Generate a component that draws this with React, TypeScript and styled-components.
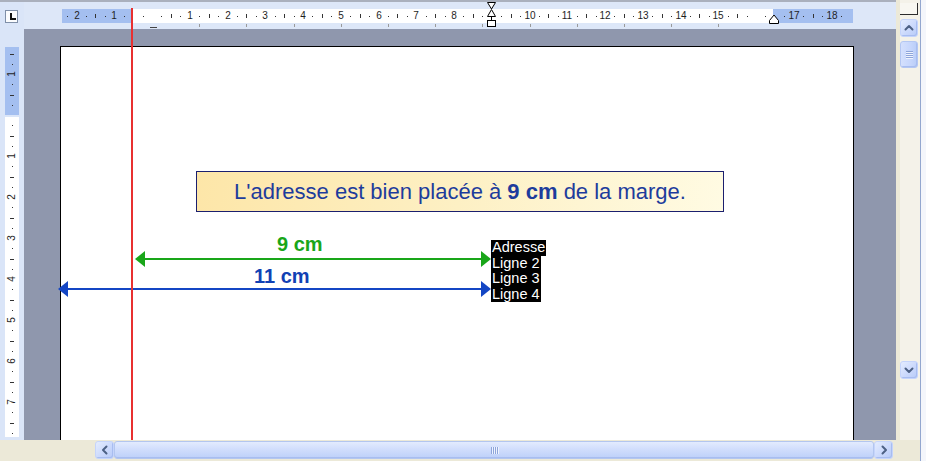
import React from 'react';
import styled, { createGlobalStyle } from 'styled-components';

const GlobalStyle = createGlobalStyle`
  html, body {
    margin: 0;
    padding: 0;
  }
  body {
    background: #ece9d8;
    font-family: "Liberation Sans", Arial, sans-serif;
  }
  * {
    box-sizing: border-box;
  }
`;

// ruler scale, in window pixels
const ZERO_X = 152;
const CM_X = 37.75;
const ZERO_Y = 115;
const CM_Y = 41;
const STRIP_X = 62;
const STRIP_Y = 47;

const Window = styled.div`
  position: relative;
  width: 926px;
  height: 461px;
  display: flex;
  overflow: hidden;
  background: #ece9d8;
  font-family: "Liberation Sans", Arial, sans-serif;
`;

const Main = styled.div`
  width: 920px;
  display: flex;
  flex-direction: column;
`;

const Edge = styled.div`
  width: 6px;
  border-left: 1px solid #93a7cf;
  background: #f4f6fb;
`;

const Body = styled.div`
  height: 440px;
  display: flex;
`;

const LeftCol = styled.div`
  width: 24px;
  display: flex;
  flex-direction: column;
  background: #dae5f8;
`;

const Corner = styled.div`
  height: 29px;
  border-top: 2px solid #aab0bd;
  padding: 8px 0 0 5px;
`;

const TabSelector = styled.div`
  position: relative;
  width: 13px;
  height: 13px;
  border: 1px solid #7f8fa8;
  background: #fbfcfe;

  &::before {
    content: '';
    position: absolute;
    left: 4px;
    top: 2px;
    width: 2px;
    height: 7px;
    background: #111;
  }
  &::after {
    content: '';
    position: absolute;
    left: 4px;
    top: 7px;
    width: 6px;
    height: 2px;
    background: #111;
  }
`;

const VRuler = styled.div`
  position: relative;
  flex: 1;
  margin: 18px 5px 3px;
  background: linear-gradient(to bottom, #a4bff0 0 68px, #dae5f8 68px 70px, #fff 70px);
`;

const VNum = styled.span<{ $pos: number }>`
  position: absolute;
  left: 50%;
  top: ${p => p.$pos}px;
  transform: translate(-50%, -50%) rotate(-90deg);
  font-size: 10px;
  line-height: 10px;
  color: #1e1e1e;
`;

const VDot = styled.span<{ $pos: number }>`
  position: absolute;
  left: 7px;
  top: ${p => p.$pos}px;
  width: 1px;
  height: 1px;
  background: #333;
`;

const VHalf = styled.span<{ $pos: number }>`
  position: absolute;
  left: 5px;
  top: ${p => p.$pos}px;
  width: 4px;
  height: 1px;
  background: #333;
`;

const Center = styled.div`
  width: 872px;
  display: flex;
  flex-direction: column;
`;

const HRulerBar = styled.div`
  position: relative;
  height: 29px;
  border-top: 2px solid #aab0bd;
  background: #dde7f8;
  padding: 7px 0 0 38px;
`;

const HStrip = styled.div<{ $left: number; $right: number }>`
  position: relative;
  width: 791px;
  height: 14px;
  background: linear-gradient(
    to right,
    #a4bff0 0 ${p => p.$left}px,
    #fff ${p => p.$left}px ${p => p.$right}px,
    #a4bff0 ${p => p.$right}px
  );
`;

const HNum = styled.span<{ $pos: number }>`
  position: absolute;
  left: ${p => p.$pos}px;
  top: 0;
  transform: translateX(-50%);
  font-size: 10px;
  line-height: 14px;
  color: #1e1e1e;
`;

const HDot = styled.span<{ $pos: number }>`
  position: absolute;
  left: ${p => p.$pos}px;
  top: 7px;
  width: 1px;
  height: 1px;
  background: #333;
`;

const HHalf = styled.span<{ $pos: number }>`
  position: absolute;
  left: ${p => p.$pos}px;
  top: 5px;
  width: 1px;
  height: 4px;
  background: #333;
`;

const TabMark = styled.span<{ $pos: number }>`
  position: absolute;
  left: ${p => p.$pos}px;
  top: 22px;
  width: 1px;
  height: 3px;
  background: #9a9a9a;
`;

const IndentDash = styled.span`
  position: absolute;
  left: 126px;
  top: 25px;
  width: 7px;
  height: 1px;
  background: #444;
`;

const Marker = styled.svg<{ $left: number; $top: number }>`
  position: absolute;
  left: ${p => p.$left}px;
  top: ${p => p.$top}px;
`;

const DocArea = styled.div`
  flex: 1;
  overflow: hidden;
  background: #8f97ad;
  padding: 17px 0 0 36px;
`;

const Page = styled.div`
  position: relative;
  width: 794px;
  height: 520px;
  flex-shrink: 0;
  background: #fff;
  border: 1px solid #000;
`;

const NoteBox = styled.div`
  position: absolute;
  left: 135px;
  top: 124px;
  width: 528px;
  height: 41px;
  border: 1px solid #1b1f6e;
  background: linear-gradient(100deg, #fde6a8 0%, #fdf0c4 50%, #fffbe3 100%);
  color: #1d3c9c;
  font-size: 22px;
  line-height: 39px;
  text-align: center;
  white-space: nowrap;

  b {
    font-weight: bold;
  }
`;

const Arrow = styled.svg<{ $left: number; $top: number }>`
  position: absolute;
  left: ${p => p.$left}px;
  top: ${p => p.$top}px;
  overflow: visible;
`;

const DimLabel = styled.div<{ $left: number; $top: number; $color: string }>`
  position: absolute;
  left: ${p => p.$left}px;
  top: ${p => p.$top}px;
  color: ${p => p.$color};
  font-size: 20px;
  line-height: 20px;
  font-weight: bold;
  white-space: nowrap;
`;

const Address = styled.div`
  position: absolute;
  left: 430px;
  top: 193px;
  display: flex;
  flex-direction: column;
  align-items: flex-start;
`;

const AddressLine = styled.span`
  background: #000;
  color: #fff;
  font-size: 14.5px;
  line-height: 15.5px;
  padding: 0 1px;
  white-space: nowrap;
`;

const MarginLine = styled.div`
  position: absolute;
  left: 131px;
  top: 8px;
  width: 2px;
  height: 432px;
  background: #e83030;
`;

const VScroll = styled.div`
  width: 24px;
  display: flex;
  flex-direction: column;
  padding: 0 2px 0 4px;
  background: linear-gradient(to right, #ece9d8 0 4px, #f4f2e9 4px);
`;

const SplitBox = styled.div`
  height: 12px;
  margin: 3px 0 4px;
  border-right: 1px solid #2c2c2c;
  border-bottom: 1px solid #2c2c2c;
  background: #f8f7f1;
`;

const ScrollBtn = styled.div<{ $wide?: boolean; $bottom?: boolean }>`
  width: ${p => (p.$wide ? 19 : 18)}px;
  height: 18px;
  flex-shrink: 0;
  display: flex;
  align-items: center;
  justify-content: center;
  border: 1px solid #c5d4fb;
  border-radius: 3px;
  background: linear-gradient(135deg, #e4ecfe 0%, #cbd9fc 55%, #b8cbf8 100%);
  box-shadow: inset -1px -1px 0 #a8bdf0;
  margin-top: ${p => (p.$bottom ? 'auto' : '0')};
  margin-bottom: ${p => (p.$bottom ? '61px' : '0')};
`;

const VThumb = styled.div`
  height: 27px;
  margin-top: 4px;
  display: flex;
  flex-direction: column;
  align-items: center;
  justify-content: center;
  gap: 1px;
  border: 1px solid #b4c7f2;
  border-radius: 3px;
  background: linear-gradient(to right, #d4e0fd 0%, #c6d6fc 60%, #b9cdf8 100%);
  box-shadow: inset -1px -1px 0 #a8bdf0;
`;

const VGrip = styled.span`
  width: 7px;
  height: 1px;
  background: #8ea5da;
  box-shadow: 0 1px 0 #eef3fe;
`;

const HScrollRow = styled.div`
  height: 21px;
  display: flex;
  align-items: flex-start;
  padding: 1px 0 0 95px;
  background: #ece9d8;
`;

const HThumb = styled.div`
  width: 760px;
  height: 18px;
  display: flex;
  align-items: center;
  justify-content: center;
  gap: 1px;
  border: 1px solid #b3c6ef;
  border-radius: 3px;
  background: linear-gradient(to bottom, #e3ebfe 0%, #cfdcfc 50%, #bdd0f9 100%);
  box-shadow: inset 0 -1px 0 #a8bdf0;
`;

const HGrip = styled.span`
  width: 1px;
  height: 7px;
  background: #8ea5da;
  box-shadow: 1px 0 0 #eef3fe;
`;

const Chevron = ({ points }: { points: string }) => (
  <svg width="10" height="10" viewBox="0 0 10 10">
    <polyline points={points} fill="none" stroke="#4d6185" strokeWidth="2" strokeLinecap="round" strokeLinejoin="round" />
  </svg>
);

function DimArrow({ left, top, length, color }: { left: number; top: number; length: number; color: string }) {
  return (
    <Arrow $left={left} $top={top} width={length} height={16} viewBox={`0 0 ${length} 16`}>
      <line x1={8} y1={8} x2={length - 8} y2={8} stroke={color} strokeWidth={2} />
      <polygon points="0,8 10,0 10,16" fill={color} />
      <polygon points={`${length},8 ${length - 10},0 ${length - 10},16`} fill={color} />
    </Arrow>
  );
}

function HorizontalRuler() {
  const ticks: React.ReactNode[] = [];
  for (let q = -9; q <= 73; q++) {
    const v = q / 4;
    if (v === 0 || v === -0.5 || v === 9 || v === 16 || v === 16.5) continue;
    const pos = Math.round(ZERO_X + v * CM_X - STRIP_X);
    if (Number.isInteger(v)) ticks.push(<HNum key={q} $pos={pos}>{Math.abs(v)}</HNum>);
    else if (q % 2 === 0) ticks.push(<HHalf key={q} $pos={pos} />);
    else ticks.push(<HDot key={q} $pos={pos} />);
  }
  const tabs = Array.from({ length: 12 }, (_, i) => Math.round(ZERO_X + (i + 1) * 1.25 * CM_X - 24));

  return (
    <HRulerBar>
      <HStrip $left={70} $right={711}>{ticks}</HStrip>
      {tabs.map(t => (
        <TabMark key={t} $pos={t} />
      ))}
      <IndentDash />
      <Marker $left={463} $top={0} width={9} height={26} viewBox="0 0 9 26">
        <polygon points="0.5,0.5 8.5,0.5 4.5,7" fill="#fff" stroke="#000" />
        <polygon points="4.5,7.5 8.5,14.5 0.5,14.5" fill="#fff" stroke="#000" />
        <rect x="0.5" y="18.5" width="8" height="6" fill="#fff" stroke="#000" />
        <line x1="4.5" y1="14.5" x2="4.5" y2="18.5" stroke="#000" />
      </Marker>
      <Marker $left={745} $top={12} width={10} height={10} viewBox="0 0 10 10">
        <polygon points="0.5,6.5 5,1 9.5,6.5 9.5,9.5 0.5,9.5" fill="#fff" stroke="#000" />
      </Marker>
    </HRulerBar>
  );
}

function VerticalRuler() {
  const ticks: React.ReactNode[] = [];
  for (let q = -6; q <= 31; q++) {
    const v = q / 4;
    if (v === 0) continue;
    const pos = Math.round(ZERO_Y + v * CM_Y - STRIP_Y);
    if (Number.isInteger(v)) ticks.push(<VNum key={q} $pos={pos}>{Math.abs(v)}</VNum>);
    else if (q % 2 === 0) ticks.push(<VHalf key={q} $pos={pos} />);
    else ticks.push(<VDot key={q} $pos={pos} />);
  }
  return <VRuler>{ticks}</VRuler>;
}

export default function App() {
  return (
    <>
      <GlobalStyle />
      <Window>
        <Main>
          <Body>
            <LeftCol>
              <Corner>
                <TabSelector />
              </Corner>
              <VerticalRuler />
            </LeftCol>

            <Center>
              <HorizontalRuler />
              <DocArea>
                <Page>
                  <NoteBox>
                    L'adresse est bien placée à <b>9 cm</b> de la marge.
                  </NoteBox>

                  <DimLabel $left={216} $top={187} $color="#19a619">9 cm</DimLabel>
                  <DimArrow left={74} top={204} length={356} color="#19a619" />

                  <DimLabel $left={193} $top={219} $color="#1141b4">11 cm</DimLabel>
                  <DimArrow left={-3} top={234} length={433} color="#1446c4" />

                  <Address>
                    <AddressLine>Adresse</AddressLine>
                    <AddressLine>Ligne 2</AddressLine>
                    <AddressLine>Ligne 3</AddressLine>
                    <AddressLine>Ligne 4</AddressLine>
                  </Address>
                </Page>
              </DocArea>
            </Center>

            <VScroll>
              <SplitBox />
              <ScrollBtn>
                <Chevron points="1.5,6.5 5,3 8.5,6.5" />
              </ScrollBtn>
              <VThumb>
                <VGrip />
                <VGrip />
                <VGrip />
                <VGrip />
              </VThumb>
              <ScrollBtn $bottom>
                <Chevron points="1.5,3.5 5,7 8.5,3.5" />
              </ScrollBtn>
            </VScroll>
          </Body>

          <HScrollRow>
            <ScrollBtn $wide>
              <Chevron points="6.5,1.5 3,5 6.5,8.5" />
            </ScrollBtn>
            <HThumb>
              <HGrip />
              <HGrip />
              <HGrip />
              <HGrip />
            </HThumb>
            <ScrollBtn $wide>
              <Chevron points="3.5,1.5 7,5 3.5,8.5" />
            </ScrollBtn>
          </HScrollRow>
        </Main>
        <Edge />
        <MarginLine />
      </Window>
    </>
  );
}
